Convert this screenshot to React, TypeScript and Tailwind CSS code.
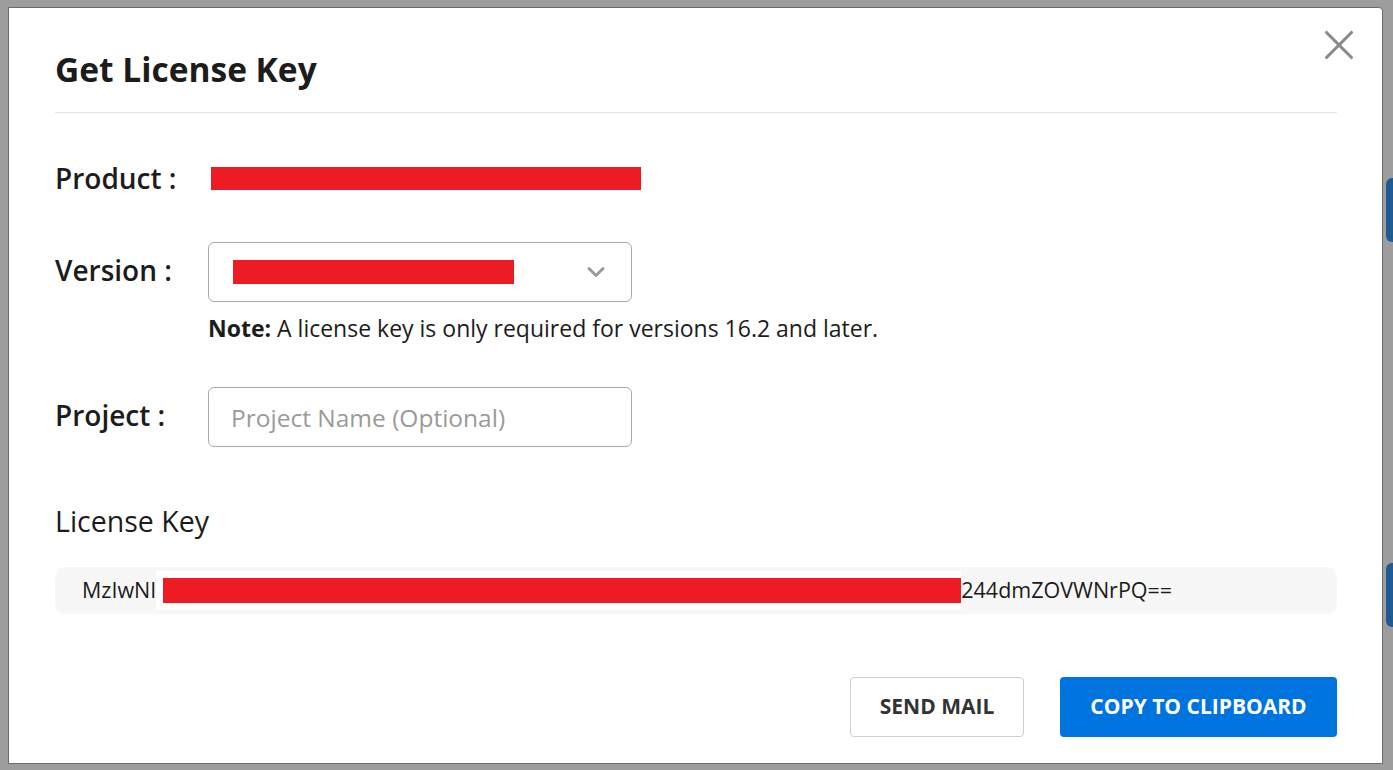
import { X, ChevronDown } from "lucide-react";

const font = { fontFamily: '"Open Sans", "Noto Sans", sans-serif' };

function Row({ label, lift, children }: { label: string; lift?: boolean; children: React.ReactNode }) {
    return (
        <div className="flex items-center">
            <div className={"w-[153px] shrink-0 text-[28px] leading-[36px] font-semibold text-[#1c1c1c] " + (lift ? "pb-[5px]" : "")}>
                {label}
            </div>
            {children}
        </div>
    );
}

export default function App() {
    return (
        <div className="relative w-[1393px] h-[770px] bg-[#9d9d9d] overflow-hidden pt-[7px] pl-[8px]" style={font}>
            {/* page behind the overlay, only a sliver shows on the right */}
            <div className="absolute right-0 top-[178px] w-[7px] h-[64px] rounded-l-md bg-[#1f5a92]" />
            <div className="absolute right-0 top-[563px] w-[7px] h-[64px] rounded-l-md bg-[#1f5a92]" />

            <div className="relative w-[1375px] h-[757px] bg-white border border-[#6a6a6a] rounded-tr-[4px] pl-[46px] pr-[45px] pt-[38px]">
                <button className="absolute left-[1305px] top-[12px] flex text-[#8a8a8a]">
                    <X size={50} strokeWidth={1.5} />
                </button>

                <h1 className="text-[33.5px] leading-[46px] font-bold text-[#1c1c1c]">Get License Key</h1>
                <div className="mt-[20px] h-px bg-[#e3e3e3]" />

                <div className="mt-[47px]">
                    <Row label="Product :">
                        <div className="ml-[3px] w-[430px] h-[23px] bg-[#ed1c24]" />
                    </Row>
                </div>

                <div className="mt-[46px]">
                    <Row label="Version :" lift>
                        <div className="w-[424px] h-[60px] border border-[#a9a9a9] rounded-[6px] flex items-center pl-[24px] pr-[21px]">
                            <div className="w-[281px] h-[24px] bg-[#ed1c24]" />
                            <ChevronDown className="ml-auto text-[#9a9a9a]" size={28} strokeWidth={2.5} />
                        </div>
                    </Row>
                    <p className="mt-[11px] ml-[153px] text-[23px] leading-[30px] text-[#1c1c1c]">
                        <span className="font-bold">Note:</span> A license key is only required for versions 16.2 and later.
                    </p>
                </div>

                <div className="mt-[44px]">
                    <Row label="Project :" lift>
                        <input
                            className="w-[424px] h-[60px] border border-[#a9a9a9] rounded-[6px] px-[22px] text-[24.5px] text-[#333] placeholder:text-[#9a9a9a] outline-none"
                            placeholder="Project Name (Optional)"
                            style={font}
                        />
                    </Row>
                </div>

                <h2 className="mt-[56px] text-[28.5px] leading-[36px] font-medium text-[#1c1c1c]">License Key</h2>

                <div className="mt-[28px] h-[47px] bg-[#f7f7f7] rounded-[10px] flex items-center pl-[27px] text-[21.5px] text-[#1c1c1c]">
                    <span>MzIwNI</span>
                    <span className="h-[39px] w-[805px] bg-white flex items-center pl-[7px]">
                        <span className="block w-full h-[25px] bg-[#ed1c24]" />
                    </span>
                    <span>244dmZOVWNrPQ==</span>
                </div>

                <div className="mt-[63px] flex justify-end gap-[36px]">
                    <button className="w-[174px] h-[60px] border border-[#cfcfcf] rounded-[4px] text-[21px] font-bold text-[#333]">
                        SEND MAIL
                    </button>
                    <button className="w-[277px] h-[60px] rounded-[4px] bg-[#0074de] text-[21px] font-bold text-white">
                        COPY TO CLIPBOARD
                    </button>
                </div>
            </div>
        </div>
    );
}
